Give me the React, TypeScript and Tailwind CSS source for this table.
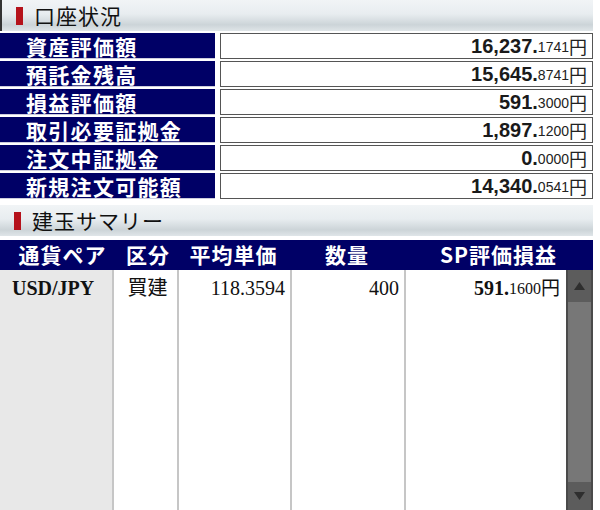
const jp = "font-['Noto_Sans_CJK_JP','Noto_Sans',sans-serif]";
const num = "font-['Liberation_Sans','Noto_Sans_CJK_JP',sans-serif]";
const serif = "font-['Liberation_Serif','Noto_Sans_CJK_JP',serif]";

const accounts = [
  { label: "資産評価額", int: "16,237.", dec: "1741" },
  { label: "預託金残高", int: "15,645.", dec: "8741" },
  { label: "損益評価額", int: "591.", dec: "3000" },
  { label: "取引必要証拠金", int: "1,897.", dec: "1200" },
  { label: "注文中証拠金", int: "0.", dec: "0000" },
  { label: "新規注文可能額", int: "14,340.", dec: "0541" },
];

const SectionHeader = ({ title }: { title: string }) => (
  <div className="h-[31px] flex items-center bg-[linear-gradient(to_bottom,#f1f4f6_0%,#e8edf0_45%,#ccd4d8_80%,#dfe5e8_100%)]">
    <span className="ml-[14px] w-[7px] h-[18px] bg-[#b5121b]" />
    <span className={`${jp} ml-[11px] text-[21px] leading-none tracking-[1px] text-[#111]`}>{title}</span>
  </div>
);

const App = () => {
  return (
    <div className="w-[600px] h-[510px] bg-white overflow-hidden">
      <div className="w-[593px] h-full flex flex-col">
        <div className="border-l-2 border-[#333]">
          <SectionHeader title="口座状況" />
        </div>

        <div className="mt-[2px] flex flex-col gap-[2px]">
          {accounts.map((a) => (
            <div key={a.label} className="flex h-[26px] gap-[5px]">
              <div className={`${jp} w-[215px] bg-[#000066] text-white font-bold text-[21px] leading-[26px] tracking-[1.3px] pl-[26px] border-b border-[#ccccdd]`}>
                {a.label}
              </div>
              <div className="flex-1 border border-[#555] flex items-end justify-end pr-[5px] pb-[1px]">
                <span className={`${num} font-bold text-[20px] leading-[22px] text-[#1a1a1a]`}>{a.int}</span>
                <span className={`${num} text-[14px] leading-[19px] text-[#222]`}>{a.dec}</span>
                <span className={`${jp} text-[18px] leading-[22px] text-[#222]`}>円</span>
              </div>
            </div>
          ))}
        </div>

        <div className="mt-[6px]">
          <SectionHeader title="建玉サマリー" />
        </div>

        <div className={`${jp} mt-[4px] h-[30px] bg-[#000066] text-white font-bold text-[21px] tracking-[1px] flex items-center`}>
          <div className="w-[113px] text-center pl-[12px]">通貨ペア</div>
          <div className="w-[64px] text-center pl-[6px]">区分</div>
          <div className="w-[113px] text-center">平均単価</div>
          <div className="w-[114px] text-center">数量</div>
          <div className="flex-1 text-center">SP評価損益</div>
        </div>

        <div className="flex-1 flex">
          <div className={`${serif} w-[112px] bg-[#e8e8e8] font-bold text-[20px] leading-[24px] pl-[12px] pt-[6px] text-[#111]`}>USD/JPY</div>
          <div className={`${serif} w-[65px] border-l-2 border-[#c6c6c6] text-center text-[20px] leading-[24px] pt-[6px] pl-[4px] text-[#111]`}>買建</div>
          <div className={`${serif} w-[113px] border-l-2 border-[#c6c6c6] text-right pr-[5px] text-[20px] leading-[24px] pt-[6px] text-[#111]`}>118.3594</div>
          <div className={`${serif} w-[114px] border-l-2 border-[#c6c6c6] text-right pr-[5px] text-[20px] leading-[24px] pt-[6px] text-[#111]`}>400</div>
          <div className="w-[162px] border-l-2 border-[#c6c6c6] pr-[6px] pt-[6px] flex justify-end items-start">
            <span className={`${serif} font-bold text-[20px] leading-[24px] text-[#111]`}>591.</span>
            <span className={`${serif} text-[16px] leading-[25px] text-[#111]`}>1600</span>
            <span className={`${jp} text-[19px] leading-[22px] text-[#111]`}>円</span>
          </div>
          <div className="flex-1 bg-[#777] border-x-2 border-[#4a4a4a] flex flex-col justify-between">
            <div className="h-[32px] bg-[#5c5c5c] flex items-center justify-center">
              <svg width="11" height="8" viewBox="0 0 11 8"><path d="M5.5 0 L11 8 L0 8 Z" fill="#2e2e2e" /></svg>
            </div>
            <div className="h-[28px] bg-[#5c5c5c] flex items-center justify-center">
              <svg width="11" height="8" viewBox="0 0 11 8"><path d="M0 0 L11 0 L5.5 8 Z" fill="#2e2e2e" /></svg>
            </div>
          </div>
        </div>
      </div>
    </div>
  );
};

export default App;
